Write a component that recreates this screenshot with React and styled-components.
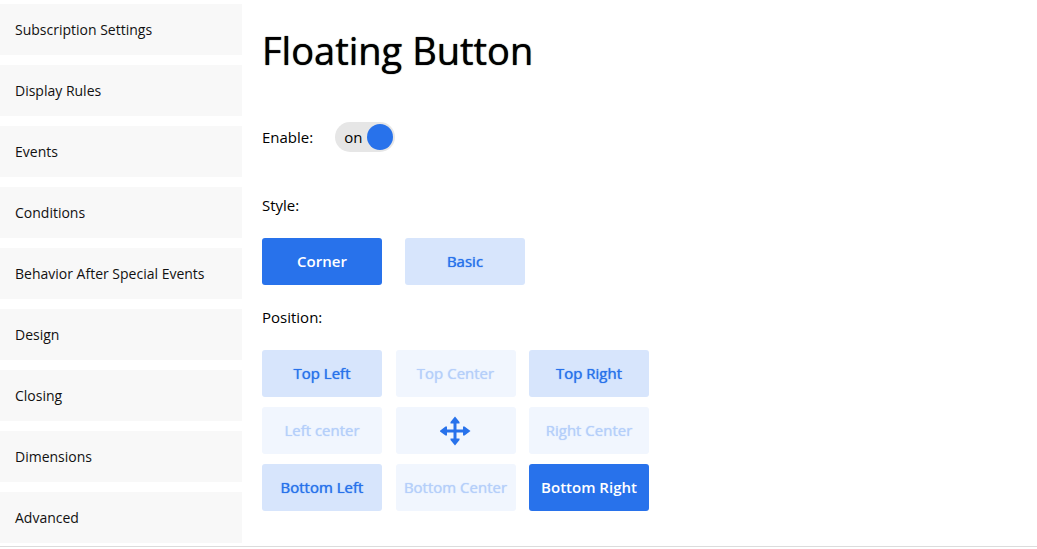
import React, { useState } from "react"
import styled, { createGlobalStyle } from 'styled-components';

const colors = {
  blue: '#2872eb',
  blueLight: '#d7e5fc',
  blueFaint: '#f1f6fe',
  blueMuted: '#b5cffa',
  panel: '#f8f8f8',
  track: '#e6e6e6',
  line: '#dcdcdc',
}

const GlobalStyle = createGlobalStyle`
  *, *::before, *::after {
    box-sizing: border-box;
  }

  body {
    margin: 0;
    background: #fff;
    color: #000;
    font-family: "Open Sans", "Noto Sans", sans-serif;
    font-size: 15px;
    line-height: 20px;
  }
`;

const Page = styled.div`
  display: flex;
  align-items: flex-start;
  padding: 4px 0 3px;
  border-bottom: 1px solid ${colors.line};
`;

const Sidebar = styled.nav`
  display: flex;
  flex-direction: column;
  flex: 0 0 242px;
  gap: 10px;
`;

const SidebarLink = styled.a`
  padding: 16px 15px 15px;
  background: ${colors.panel};
  color: #111;
  font-size: 14px;
  text-decoration: none;
`;

const Main = styled.main`
  flex: 1;
  padding: 16px 20px 0;
`;

const Title = styled.h1`
  margin: 0 0 42px;
  font-size: 38px;
  font-weight: 400;
  line-height: 60px;
  text-shadow: 0 0 1px currentColor;
`;

const EnableRow = styled.div`
  display: flex;
  align-items: center;
  gap: 22px;
  margin-bottom: 43px;
`;

const Switch = styled.label`
  display: flex;
  align-items: center;
  justify-content: space-between;
  flex-direction: ${({$on}) => ($on ? 'row' : 'row-reverse')};
  width: 60px;
  height: 30px;
  padding: 2px;
  border-radius: 15px;
  background: ${colors.track};
  cursor: pointer;
`;

const SwitchInput = styled.input`
  position: absolute;
  opacity: 0;
`;

const SwitchText = styled.span`
  padding: ${({$on}) => ($on ? '0 0 0 7px' : '0 5px 0 0')};
`;

const Knob = styled.span`
  flex: none;
  width: 26px;
  height: 26px;
  border-radius: 50%;
  background: ${({$on}) => ($on ? colors.blue : '#999')};
`;

const Group = styled.section`
  margin-bottom: 22px;
`;

const GroupLabel = styled.h2`
  margin: 0 0 23px;
  font-size: 15px;
  font-weight: 400;
  line-height: 20px;
`;

const Options = styled.div`
  display: flex;
  gap: 23px;
`;

const Positions = styled.div`
  display: grid;
  grid-template-columns: repeat(3, 120px);
  justify-content: space-between;
  row-gap: 10px;
  max-width: 387px;
`;

const Option = styled.button`
  width: 120px;
  height: 47px;
  padding: 0 0 1px;
  border: 0;
  border-radius: 3px;
  background: ${({$active}) => ($active ? colors.blue : colors.blueLight)};
  color: ${({$active}) => ($active ? '#fff' : colors.blue)};
  font: inherit;
  font-weight: ${({$active}) => ($active ? 600 : 400)};
  text-shadow: ${({$active}) => ($active ? 'none' : '0 0 1px currentColor')};
  white-space: nowrap;
  cursor: pointer;

  &:disabled {
    background: ${colors.blueFaint};
    color: ${colors.blueMuted};
    cursor: default;
  }
`;

const MoveCell = styled.div`
  display: flex;
  align-items: center;
  justify-content: center;
  border-radius: 3px;
  background: ${colors.blueFaint};
`;

const sections = [
  'Subscription Settings',
  'Display Rules',
  'Events',
  'Conditions',
  'Behavior After Special Events',
  'Design',
  'Closing',
  'Dimensions',
  'Advanced',
]

const styles = ['Corner', 'Basic']

const positions = [
  {label: 'Top Left'},
  {label: 'Top Center', disabled: true},
  {label: 'Top Right'},
  {label: 'Left center', disabled: true},
  {label: 'move'},
  {label: 'Right Center', disabled: true},
  {label: 'Bottom Left'},
  {label: 'Bottom Center', disabled: true},
  {label: 'Bottom Right'},
]

const MoveIcon = () => (
  <svg width="32" height="30" viewBox="0 0 32 30" fill={colors.blue} aria-hidden="true">
    <path d="M15 0.5 L19.5 6 V7.5 H16.5 V13.5 H23 V10.5 H24.5 L30.5 15 L24.5 19.5 H23 V16.5 H16.5 V22.5 H19.5 V24 L15 29.5 L10.5 24 V22.5 H13.5 V16.5 H7 V19.5 H5.5 L-0.5 15 L5.5 10.5 H7 V13.5 H13.5 V7.5 H10.5 V6 Z" />
  </svg>
)

function App() {
  const [enabled, setEnabled] = useState(true)
  const [style, setStyle] = useState('Corner')
  const [position, setPosition] = useState('Bottom Right')

  return (
    <>
      <GlobalStyle />
      <Page>
        <Sidebar>
          {sections.map((name) => (
            <SidebarLink key={name} href="#">{name}</SidebarLink>
          ))}
        </Sidebar>
        <Main>
          <Title>Floating Button</Title>
          <EnableRow>
            <label htmlFor="enable">Enable:</label>
            <Switch $on={enabled}>
              <SwitchInput
                id="enable"
                type="checkbox"
                checked={enabled}
                onChange={() => setEnabled(!enabled)}
              />
              <SwitchText $on={enabled}>{enabled ? 'on' : 'off'}</SwitchText>
              <Knob $on={enabled} />
            </Switch>
          </EnableRow>
          <Group>
            <GroupLabel>Style:</GroupLabel>
            <Options>
              {styles.map((name) => (
                <Option key={name} type="button" $active={style === name} onClick={() => setStyle(name)}>
                  {name}
                </Option>
              ))}
            </Options>
          </Group>
          <Group>
            <GroupLabel>Position:</GroupLabel>
            <Positions>
              {positions.map(({label, disabled}) => label === 'move' ? (
                <MoveCell key={label}><MoveIcon /></MoveCell>
              ) : (
                <Option
                  key={label}
                  type="button"
                  disabled={disabled}
                  $active={position === label}
                  onClick={() => setPosition(label)}
                >
                  {label}
                </Option>
              ))}
            </Positions>
          </Group>
        </Main>
      </Page>
    </>
  )
}
export default App;
